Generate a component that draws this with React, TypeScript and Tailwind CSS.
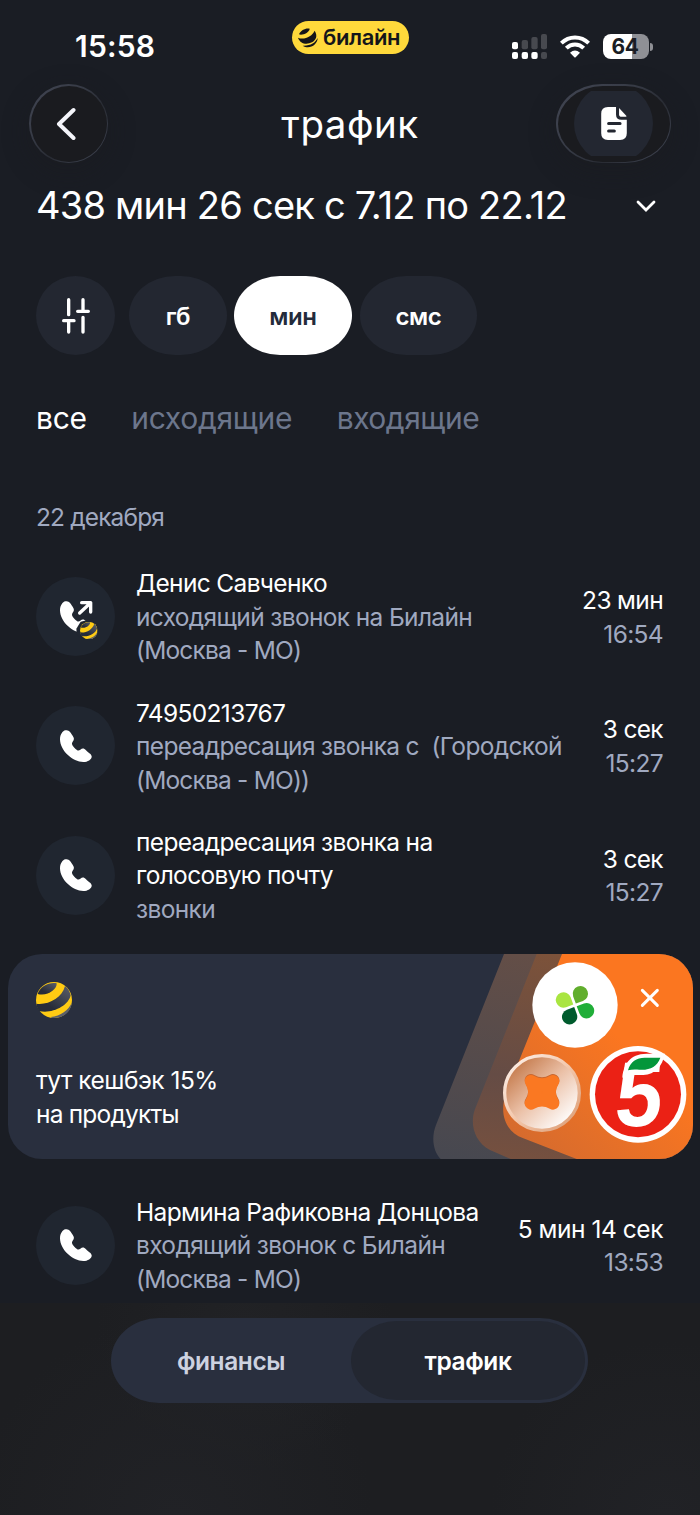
import clsx from "clsx";

type Call = {
	title: string[];
	details: string[];
	duration: string;
	time: string;
	outgoing?: boolean;
};

const calls: Call[] = [
	{
		title: ["Денис Савченко"],
		details: ["исходящий звонок на Билайн", "(Москва - МО)"],
		duration: "23 мин",
		time: "16:54",
		outgoing: true,
	},
	{
		title: ["74950213767"],
		details: ["переадресация звонка с\u00a0 (Городской", "(Москва - МО))"],
		duration: "3 сек",
		time: "15:27",
	},
	{
		title: ["переадресация звонка на", "голосовую почту"],
		details: ["звонки"],
		duration: "3 сек",
		time: "15:27",
	},
];

const lastCall: Call = {
	title: ["Нармина Рафиковна Донцова"],
	details: ["входящий звонок с Билайн", "(Москва - МО)"],
	duration: "5 мин 14 сек",
	time: "13:53",
};

const phonePath =
	"M16 1C8 3 0 13 0 28C0 62 38 96 70 96C84 96 96 87 95 79C94 72 83 67 78 61C72 54 67 54 61 59C55 64 51 61 43 53C36 46 34 40 38 35C43 29 43 24 38 17C32 8 27-2 16 1Z";

function Ball({ className }: { className: string }) {
	return (
		<svg viewBox="0 0 108 108" className={className}>
			<defs>
				<linearGradient id="ballDark" x1="0" y1="1" x2="1" y2="0">
					<stop offset="0.3" stopColor="#272c39" />
					<stop offset="1" stopColor="#5b5f6a" />
				</linearGradient>
			</defs>
			<circle cx="54" cy="54" r="54" fill="#ffcb13" />
			<g fill="url(#ballDark)">
				<path d="M5 36C12 14 38 0 62 4C64 22 34 44 5 36Z" />
				<path d="M1 65C36 70 78 48 87 12C96 20 102 29 104 40C98 72 46 97 9 87C4 80 2 73 1 65Z" />
			</g>
			<path d="M44 105C74 102 98 84 107 62C106 90 80 108 54 108C48 108 47 107 44 105Z" fill="#5b5f6a" />
		</svg>
	);
}

function StatusBar() {
	return (
		<div className="flex h-[84px] items-start pl-[75px] pr-[47px]">
			<div className="mt-[28px] w-[217px] text-[30px] leading-9 font-semibold tracking-[0.2px]">
				15:58
			</div>
			<div className="mt-[21px] flex h-[33px] w-[117px] items-center rounded-full bg-[#ffd93b] pl-[6px] text-[#14151a]">
				<svg viewBox="0 0 60 60" className="mr-[5px] h-5 w-5 fill-current">
					<path d="M3 19C8 6 24-1 35 2C34 13 14 23 3 19Z" />
					<path d="M0 29C18 37 43 25 50 8C60 24 54 36 42 43C24 52 6 46 0 29Z" />
					<path d="M14 53C38 54 52 44 59 30C59 50 34 66 14 53Z" />
				</svg>
				<span className="text-[22px] font-semibold tracking-[-0.4px]">билайн</span>
			</div>
			<div className="mt-[34px] ml-auto flex items-center">
				<svg viewBox="0 0 105 75" className="h-[25px] w-[35px]" fill="#fff">
					<g fill="#47494f">
						<rect x="29" y="18" width="19" height="28" rx="6" />
						<rect x="58" y="9" width="19" height="37" rx="6" />
						<rect x="87" y="0" width="18" height="46" rx="6" />
						<rect x="87" y="54" width="18" height="21" rx="6" />
					</g>
					<rect x="0" y="24" width="18" height="22" rx="6" />
					<rect x="0" y="54" width="18" height="21" rx="6" />
					<rect x="29" y="54" width="19" height="21" rx="6" />
					<rect x="58" y="54" width="19" height="21" rx="6" />
				</svg>
				<svg viewBox="0 0 90 68" className="ml-[13px] h-[23px] w-[30px]" fill="none">
					<path d="M4 24C27 1 63 1 86 24" stroke="#fff" strokeWidth="12" />
					<path d="M19 39C34 24 56 24 71 39" stroke="#fff" strokeWidth="12" />
					<path d="M30 53Q45 39 60 53L47 66Q45 68 43 66Z" fill="#fff" />
				</svg>
				<div className="ml-[13px] flex h-[25px] w-[46px] items-center justify-center rounded-[8px] bg-[linear-gradient(90deg,#fff_64%,#8f9095_64%)] pr-[2px] text-[21px] font-bold tracking-[-0.3px] text-[#1a1d24]">
					64
				</div>
				<div className="ml-px h-2 w-[3px] rounded-r-full bg-[#8f9095]" />
			</div>
		</div>
	);
}

function Header() {
	return (
		<div className="flex h-[79px] items-center justify-between pr-[29px] pl-[29px]">
			<button
				type="button"
				className="h-[79px] w-[79px] rounded-full bg-[linear-gradient(135deg,#424653,#373b46_35%,#292c34_60%,#444957)] p-[1.5px] shadow-[0_8px_24px_4px_rgba(26,27,30,0.3)]"
			>
				<span className="flex h-full w-full items-center justify-center rounded-full bg-[#1a1b1f]">
					<svg viewBox="0 0 20 34" className="mr-[5px] h-[34px] w-5" fill="none">
						<path d="M17.5 3 3 17l14.5 14" stroke="#f4f5fa" strokeWidth="4" strokeLinecap="round" strokeLinejoin="round" />
					</svg>
				</span>
			</button>
			<h1 className="ml-9 pt-[3px] text-[38.5px] tracking-[0.5px]">трафик</h1>
			<button
				type="button"
				className="h-[79px] w-[115px] rounded-[46px/39.5px] bg-[linear-gradient(135deg,#424653,#373b46_40%,#292c34_65%,#444957)] p-[1.5px] shadow-[0_8px_24px_4px_rgba(26,27,30,0.3)]"
			>
				<span className="flex h-full w-full items-center justify-center rounded-[45px/38px] bg-[#1a1b1f]">
					<span className="flex h-[65px] w-[79px] items-center justify-center overflow-hidden">
						<span className="flex h-[79px] w-[79px] shrink-0 items-center justify-center rounded-full bg-[#232731]">
							<svg viewBox="0 0 76 98" className="h-[33px] w-[26px]">
								<path d="M20 0H44V22Q44 38 60 38H76V78Q76 98 56 98H20Q0 98 0 78V20Q0 0 20 0Z" fill="#fff" />
								<path d="M53 3 75 27Q76 29 73 29H61Q53 29 53 22Z" fill="#fff" />
								<path d="M22 49H56M22 71H39" stroke="#232731" strokeWidth="9" strokeLinecap="round" />
							</svg>
						</span>
					</span>
				</span>
			</button>
		</div>
	);
}

function CallRow({ call }: { call: Call }) {
	return (
		<div className="flex h-[100px] items-center pr-[37px] pl-9 text-[24.5px] leading-[33.4px] tracking-[-0.65px]">
			<div className="flex h-[79px] w-[79px] shrink-0 items-center justify-center rounded-full bg-[#202630]">
				{call.outgoing ? (
					<svg viewBox="0 0 96 96" className="h-8 w-8 overflow-visible">
						<path d={phonePath} fill="#fff" />
						<path d="M50 98 49 83 62 62 110 50V110H60Z" fill="#202630" />
						<path d="M59 36 92 5M65 5H92V33" fill="none" stroke="#fff" strokeWidth="10" strokeLinecap="round" strokeLinejoin="round" />
						<svg x="60" y="62" width="53" height="53">
							<Ball className="h-[53px] w-[53px]" />
						</svg>
					</svg>
				) : (
					<svg viewBox="0 0 96 96" className="h-8 w-8">
						<path d={phonePath} fill="#fff" />
					</svg>
				)}
			</div>
			<div className="ml-[21px] pt-[2px] whitespace-nowrap">
				{call.title.map((line) => (
					<p key={line}>{line}</p>
				))}
				{call.details.map((line) => (
					<p
						key={line}
						className={clsx("text-[#a0a9c0]", line.startsWith("(") && "tracking-[-0.8px]")}
					>
						{line}
					</p>
				))}
			</div>
			<div className="ml-auto pt-[2px] text-right whitespace-nowrap">
				<p className={clsx(call.duration.length > 8 && "tracking-[-0.45px]")}>{call.duration}</p>
				<p className="text-[#a0a9c0]">{call.time}</p>
			</div>
		</div>
	);
}

function BannerArt() {
	return (
		<svg viewBox="0 42 819 615" className="absolute top-0 right-0 h-[205px] w-[273px]">
			<defs>
				<linearGradient id="band1" x1="0.3" y1="0" x2="0.1" y2="1">
					<stop stopColor="#634e47" />
					<stop offset="1" stopColor="#474850" />
				</linearGradient>
				<linearGradient id="band2" x1="0.3" y1="0" x2="0.2" y2="1">
					<stop stopColor="#7c523a" />
					<stop offset="0.6" stopColor="#654c45" />
					<stop offset="1" stopColor="#75503f" />
				</linearGradient>
				<linearGradient id="band3" x1="0" y1="1" x2="0.55" y2="0.35">
					<stop stopColor="#cf6930" />
					<stop offset="1" stopColor="#fb7620" />
				</linearGradient>
				<linearGradient id="coin" x1="0.1" y1="0.1" x2="0.85" y2="0.9">
					<stop stopColor="#c27545" />
					<stop offset="0.5" stopColor="#ebc1a8" />
					<stop offset="1" stopColor="#fff" />
				</linearGradient>
				<linearGradient id="coinRim" x1="0.1" y1="0.1" x2="0.9" y2="0.9">
					<stop stopColor="#fbece3" />
					<stop offset="0.5" stopColor="#f3c7ab" />
					<stop offset="1" stopColor="#dfa37d" />
				</linearGradient>
			</defs>
			<path d="M252 42 48 555C34 590 38 632 62 657H819V42Z" fill="url(#band1)" />
			<path d="M350 42 164 510C150 550 162 606 210 630L272 657H819V42Z" fill="url(#band2)" />
			<path d="M426 42 256 465C238 525 258 576 310 595L470 657H819V42Z" fill="url(#band3)" />

			<circle cx="465" cy="195" r="128" fill="#fff" />
			<g transform="translate(465 196) rotate(-20)">
				<path d="M-4-4H-27A23 23 0 1 1-4-27Z" fill="#a9e541" />
				<path d="M4-4V-27A23 23 0 1 1 27-4Z" fill="#61ae2d" />
				<path d="M4 4H27A23 23 0 1 1 4 27Z" fill="#20ae38" />
				<path d="M-4 4V27A23 23 0 1 1-27 4Z" fill="#005b2d" />
			</g>

			<circle cx="366" cy="459" r="112" fill="url(#coin)" stroke="url(#coinRim)" strokeWidth="10" />
			<g strokeWidth="38" strokeLinejoin="round">
				<path d="M333 421Q366 441 399 421Q377 454 399 487Q366 469 333 487Q355 454 333 421Z" fill="#c86630" stroke="#c86630" />
				<path d="M333 424Q366 444 399 424Q377 457 399 490Q366 470 333 490Q355 457 333 424Z" fill="#fa7822" stroke="#fa7822" />
			</g>

			<circle cx="654" cy="463" r="145" fill="#fff" />
			<circle cx="654" cy="463" r="129" fill="#eb2115" />
			<text
				transform="translate(580 557) skewX(-5) scale(0.92 1)"
				fontSize="276"
				className="[font-family:'Liberation_Sans',sans-serif] font-bold"
				fill="#fff"
			>
				5
			</text>
			<path d="M607 412C611 375 628 341 680 341H735C726 380 706 402 670 405H630L620 430Z" fill="#fff" />
			<path d="M624 391C631 364 650 353 674 353H721C711 380 690 391 658 389C645 388 634 388 624 391Z" fill="#04963a" />

			<path d="M667 151 712 196M712 151 667 196" stroke="#fff" strokeWidth="9" strokeLinecap="round" />
		</svg>
	);
}

function Banner() {
	return (
		<div className="relative mx-[7.5px] h-[205px] overflow-hidden rounded-[34px] bg-[#292f3e]">
			<BannerArt />
			<div className="pt-[28px] pl-[28.5px]">
				<Ball className="h-9 w-9" />
				<p className="mt-[46px] text-[24.5px] leading-[33.4px] tracking-[-0.5px]">тут кешбэк 15%</p>
				<p className="text-[24.5px] leading-[33.4px] tracking-[-0.8px]">на продукты</p>
			</div>
		</div>
	);
}

const chips = [
	{ label: "гб", size: "w-[98px]" },
	{ label: "мин", size: "ml-[7px] w-[118px]", active: true },
	{ label: "смс", size: "ml-2 w-[117px]" },
];

export default function App() {
	return (
		<div className="relative flex h-[1515px] w-[700px] flex-col overflow-hidden bg-[#1a1d24] font-['Inter',sans-serif] text-white">
			<StatusBar />
			<Header />

			<div className="mt-[16px] flex h-[54px] items-center pr-[44px] pl-9">
				<span className="pb-[2px] text-[38px] tracking-[-0.78px] whitespace-nowrap">
					438 мин 26 сек с 7.12 по 22.12
				</span>
				<svg viewBox="0 0 20 12" className="ml-auto h-3 w-5" fill="none">
					<path d="m2 2 8 8 8-8" stroke="#fff" strokeWidth="2.8" strokeLinecap="round" />
				</svg>
			</div>

			<div className="mt-[43px] flex h-[79px] pl-9">
				<button
					type="button"
					className="mr-[14px] flex h-[79px] w-[79px] items-center justify-center rounded-full bg-[#232731]"
				>
					<svg viewBox="0 0 84 108" className="h-9 w-7" fill="none" stroke="#fff" strokeWidth="10" strokeLinecap="round">
						<path d="M20 5V50M5 68H36M20 68V102M63 5V40M47 40H79M63 58V102" />
					</svg>
				</button>
				{chips.map((chip) => (
					<button
						type="button"
						key={chip.label}
						className={clsx(
							"h-[79px] rounded-[46px/39.5px] pt-[2px] text-[24px] font-semibold tracking-[-0.4px]",
							chip.size,
							chip.active ? "bg-white text-[#232b3b]" : "bg-[#232731]",
						)}
					>
						{chip.label}
					</button>
				))}
			</div>

			<div className="mt-[41px] flex h-11 items-center gap-[44.5px] pl-9 text-[30px] tracking-[-0.3px] text-[#6c768c]">
				<span className="text-white">все</span>
				<span>исходящие</span>
				<span className="tracking-[-0.5px]">входящие</span>
			</div>

			<div className="mt-[59px] flex h-9 items-center pl-9 text-[24.5px] tracking-[-0.85px] text-[#a0a9c0]">
				22 декабря
			</div>

			<div className="mt-[31.5px] flex flex-col gap-[29.3px]">
				{calls.map((call) => (
					<CallRow key={call.title[0]} call={call} />
				))}
			</div>

			<div className="mt-[29px]">
				<Banner />
			</div>

			<div className="mt-[36px]">
				<CallRow call={lastCall} />
			</div>

			<div className="absolute inset-x-0 bottom-0 h-[212px] bg-[#1d1e21] bg-[radial-gradient(circle_at_25%_100%,#212226,transparent_35%),radial-gradient(circle_at_95%_100%,#212226,transparent_25%),radial-gradient(circle_at_35%_10%,#212225,transparent_30%)] pt-[15px]">
				<div className="ml-[111px] flex h-[85px] w-[477px] items-center rounded-[48px/42.5px] bg-[#292f3e] pr-[3px] text-[24.5px] font-semibold tracking-[-0.4px]">
					<span className="flex-1 pt-[2px] text-center text-[#cdd2e0]">финансы</span>
					<span className="flex h-[79px] w-[234px] items-center justify-center rounded-[46px/39.5px] bg-[#232731] pt-[2px]">
						трафик
					</span>
				</div>
			</div>
		</div>
	);
}
